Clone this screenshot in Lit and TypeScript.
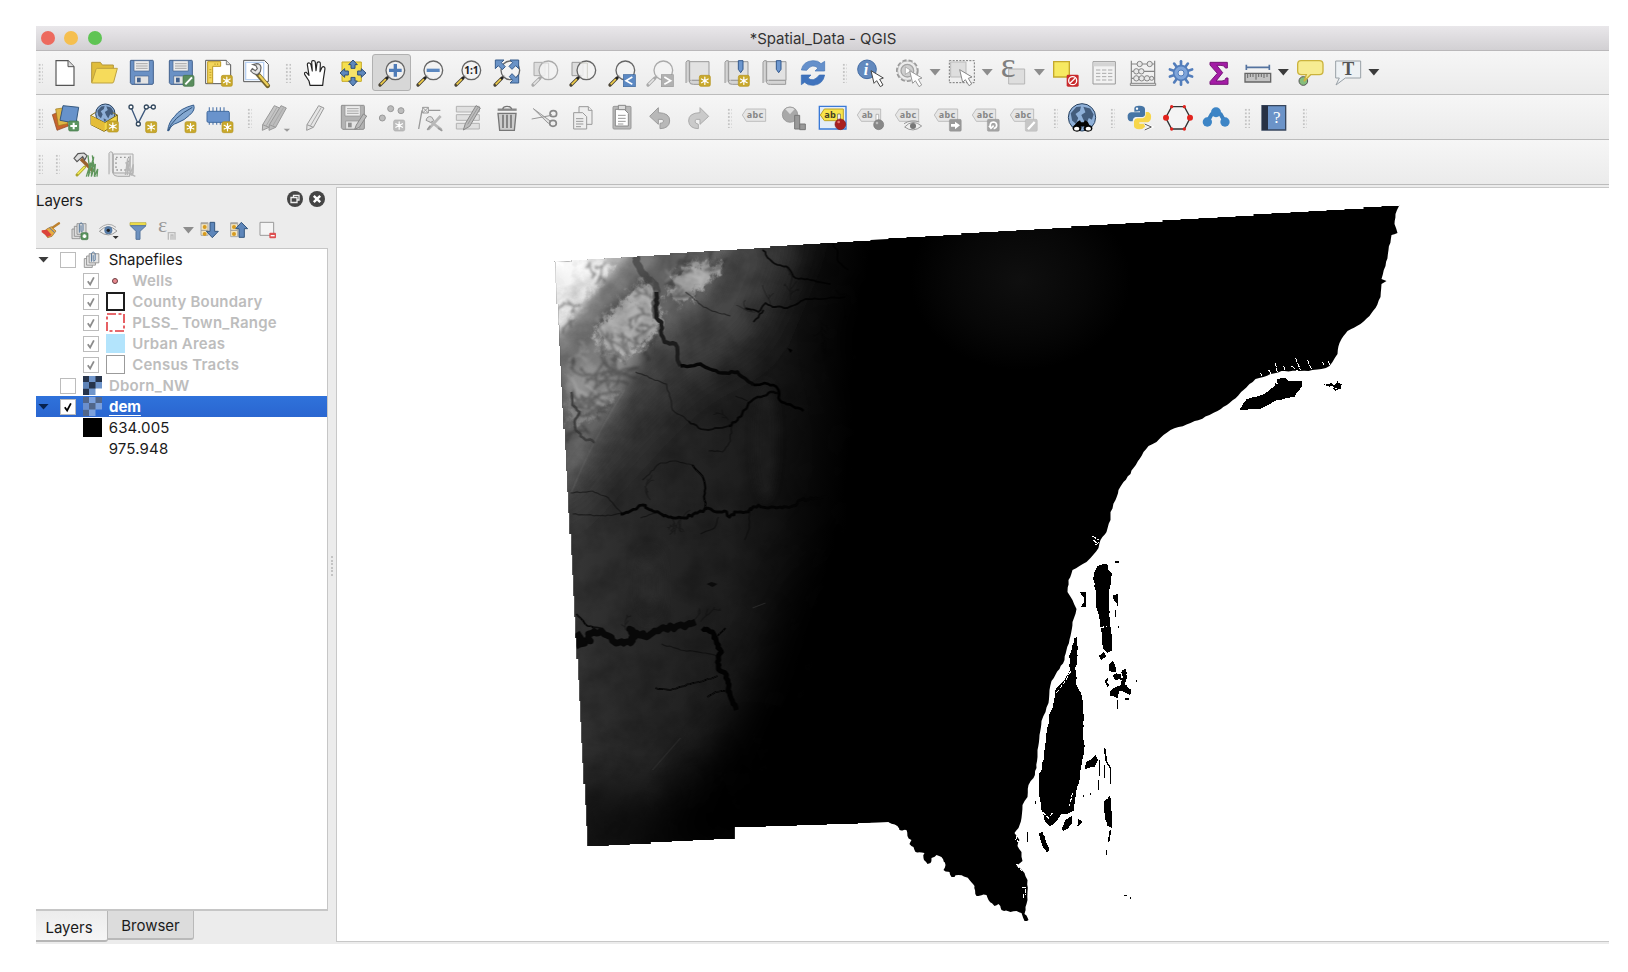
import { LitElement, html, svg, css } from "lit";
import { customElement } from "lit/decorators.js";

/* ---------- icon fragments, drawn on an 84 x 84 grid ---------- */
const star = (x: number, y: number, c = "#c9a92c") => svg`
  <rect x=${x} y=${y} width="33" height="33" rx="5" fill=${c} stroke=${c === "#c9a92c" ? "#b3941f" : "#aaa"} stroke-width="2"/>
  <g transform="translate(${x + 16.5} ${y + 16.5})" stroke="#fff" stroke-width="3.6" stroke-linecap="round">
    <path d="M0-11V11M-10-5.5L10 5.5M-10 5.5L10-5.5"/><circle r="4.5" fill="#fff" stroke="none"/></g>`;
const dimStar = (x: number, y: number) => star(x, y, "#bdbdbd");
const plus = (x: number, y: number, s = 30) => svg`
  <rect x=${x} y=${y} width=${s} height=${s} rx="4" fill="#5b9460" stroke="#3f7747" stroke-width="2"/>
  <path d="M${x + s / 2} ${y + 5}v${s - 10}M${x + 5} ${y + s / 2}h${s - 10}" stroke="#fff" stroke-width="6"/>`;
const mag = (inner: unknown, dim = false) => svg`
  <path d="M6 78L26 58" stroke=${dim ? "#a9a9a9" : "#4a4335"} stroke-width="10" stroke-linecap="round"/>
  <path d="M8 76L24 60" stroke=${dim ? "#e4e4e4" : "#f2cf49"} stroke-width="5"/>
  <path d="M24 60L36 49" stroke=${dim ? "#aaa" : "#222"} stroke-width="7"/>
  <circle cx="52" cy="34" r="28" fill="#f2f3f2" fill-opacity=".88" stroke=${dim ? "#aaa" : "#666"} stroke-width="4"/>${inner}`;
const cursor = (x: number, y: number, s = "#444") => svg`
  <path transform="translate(${x} ${y})" d="M0 0L9 38L17 30L28 48L36 43L26 26L37 22Z" fill="#fff" stroke=${s} stroke-width="3" stroke-linejoin="round"/>`;
const tag = (t: string) => svg`
  <path d="M1 33L13 15H71V52H13Z" fill="#e6e6e6" stroke="#b5b5b5" stroke-width="2.5"/>
  <text x="14" y="42" class="b" font-size="27" fill="#858585" textLength=${t.length * 16.5}>${t}</text>`;
const scroll = (extra: unknown) => svg`
  <path d="M17 8H75V64H17Z" fill="#e2e2e2" stroke="#999" stroke-width="3"/>
  <path d="M6 72V10Q8 3 16 5V66Q16 77 28 76H74V64H24" fill="#d4d4d4" stroke="#999" stroke-width="3"/>${extra}`;
const pin = svg`<path d="M46 5H60V31L53 41L46 31Z" fill="#6d97cf" stroke="#33588c" stroke-width="3"/>`;
const floppy = (c: string, s: string, x: unknown) => svg`
  <path d="M8 4H74Q76 4 76 7V72Q76 76 72 76H11L7 71V6Z" fill=${c} stroke=${s} stroke-width="3"/>
  <path d="M18 5H64V36H18Z" fill="#ececec" stroke=${s} stroke-width="2"/>
  <path d="M24 14H59M24 21H59M24 28H59" stroke="#999" stroke-width="2.5"/>
  <path d="M20 51H62V75H20Z" fill="#e4e4e4" stroke=${s} stroke-width="2"/><path d="M27 56H38V70H27Z" fill=${s}/>${x}`;
const globe = (cx: number, cy: number, r: number) => svg`
  <circle cx=${cx} cy=${cy} r=${r} fill="#8fb0d8" stroke="#26405f" stroke-width="3"/>
  <g transform="translate(${cx} ${cy}) scale(${r / 40})" fill="#435c7c">
  <path d="M-33-12L-17-30L-3-32L-6-19L-19-10L-11 2L-18 19L-29 9Z"/><path d="M4-31L24-26L34-8L29 7L20 2L12 20L3 5L-2-7L10-15Z"/><path d="M-7 19L6 26L-5 33Z"/></g>`;
const pencil = (dx: number, c = "#d0d0d0") => svg`
  <path transform="translate(${dx} 0)" d="M14 62L49 5L65 12L33 70L13 79Z M14 62L33 70" fill=${c} stroke="#999" stroke-width="3" stroke-linejoin="round"/>
  <path transform="translate(${dx} 0)" d="M24 66L57 10" stroke="#aaa" stroke-width="3"/>`;

const icons: Record<string, unknown> = {
  file: svg`<path d="M15 5H51L69 23V79H15Z" fill="#fff" stroke="#555" stroke-width="3.5"/><path d="M51 5V23H69" fill="#ddd" stroke="#555" stroke-width="3"/>`,
  open: svg`<path d="M5 70V10H31L37 18H70V30" fill="#e0bd3c" stroke="#b3973b" stroke-width="3"/><path d="M5 72L18 31Q19 28 23 28H82L71 69Q70 72 66 72Z" fill="#f6db5b" stroke="#bda13f" stroke-width="3"/>`,
  save: floppy("#6a91c5", "#42618d", ""),
  saveAs: floppy("#6a91c5", "#42618d", svg`<rect x="48" y="49" width="33" height="33" rx="5" fill="#5a8d5e" stroke="#417346" stroke-width="2"/><path d="M55 76L75 55" stroke="#fff" stroke-width="6"/>`),
  layoutNew: svg`<path d="M2 4H64L77 17V74H2Z" fill="#fff" stroke="#555" stroke-width="3"/><path d="M64 4V17H77" fill="#ddd" stroke="#555" stroke-width="2"/>
    <path d="M8 8H47V22H23V72H8Z" fill="#f3d65b" stroke="#bd9a23" stroke-width="3"/><path d="M13 32h6M13 40h6M13 48h6M13 56h6M30 13v5M38 13v5" stroke="#a68216" stroke-width="2"/>${star(49, 49)}`,
  layouts: svg`<path d="M2 4H64L76 16V68H2Z" fill="#fff" stroke="#555" stroke-width="3"/><path d="M8 10H62V62H8Z" fill="#fff" stroke="#b9d1f3" stroke-width="4"/>
    <path d="M41 42L74 80" stroke="#75652b" stroke-width="14" stroke-linecap="round"/><path d="M50 50L74 78" stroke="#edcf59" stroke-width="7" stroke-linecap="round"/>
    <path d="M30 17L41 14Q53 14 54 26L52 38L43 47Q31 46 23 36L28 29L37 35L43 29L39 20Z" fill="#e5e5e5" stroke="#666" stroke-width="3.5"/>`,
  hand: svg`<path d="M27 79L24 66L11 46Q9 39 16 40L24 49L19 17Q19 11 25 12Q29 13 30 18L34 36L32 9Q33 4 38 5Q43 5 43 11L45 35L48 12Q51 7 56 9Q59 11 58 17L57 38L63 25Q67 21 71 25Q73 29 71 35L67 61L65 79Z" fill="#fff" stroke="#222" stroke-width="3.5" stroke-linejoin="round"/>`,
  pan: svg`<path d="M9 9H67V67H9Z" fill="#f5df4e" stroke="#c6a927" stroke-width="3"/><g fill="#5e88bd" stroke="#2e4f7c" stroke-width="3">
    <path d="M42 3L55 17H48V28H36V17H29Z"/><path d="M42 81L29 66H36V55H48V66H55Z"/><path d="M3 42L17 29V36H28V48H17V55Z"/><path d="M81 42L67 55V48H56V36H67V29Z"/></g><path d="M31 31H53V53H31Z" fill="#f5e36b"/>`,
  zoomIn: mag(svg`<path d="M52 15V53M33 34H71" stroke="#4e7bb7" stroke-width="10"/>`),
  zoomOut: mag(svg`<path d="M32 34H71" stroke="#5c88c0" stroke-width="10"/>`),
  zoomOne: mag(svg`<text x="31" y="45" class="b" font-size="31" fill="#222" textLength="43">1:1</text>`),
  zoomFull: svg`${mag("")}<g fill="#6a93c7" stroke="#375c8c" stroke-width="3"><path d="M7 3H33L25 11L37 23L28 32L16 20L7 29Z"/><path d="M77 3V29L68 20L57 31L48 22L59 11L51 3Z"/><path d="M77 72H51L59 64L49 53L57 44L69 56L77 47Z"/></g>`,
  zoomSel: svg`<path d="M9 10H42V50H9Z" fill="#ddd" stroke="#aaa" stroke-width="3"/>${mag(svg`<path d="M34 12H53V60" fill="none" stroke="#d4d4d4" stroke-width="3"/>`, true)}`,
  zoomLayer: svg`<path d="M9 10H42V50H9Z" fill="#ddd" stroke="#999" stroke-width="3"/>${mag(svg`<path d="M34 12H55V60" fill="none" stroke="#d0d0c8" stroke-width="3"/>`)}`,
  zoomLast: mag(svg`<rect x="46" y="47" width="36" height="36" fill="#5c89c3" stroke="#3b659a" stroke-width="2"/><path d="M73 54L54 65L73 76" fill="none" stroke="#fff" stroke-width="5"/>`),
  zoomNext: mag(svg`<rect x="46" y="47" width="36" height="36" fill="#b1b1b1" stroke="#999" stroke-width="2"/><path d="M55 54L74 65L55 76" fill="none" stroke="#fff" stroke-width="5"/>`, true),
  mapNew: scroll(star(46, 49)),
  bmNew: scroll(svg`${pin}${star(46, 49)}`),
  bookmarks: scroll(pin),
  refresh: svg`<path d="M7 33Q12 7 41 5Q58 4 66 14L77 7V36H48L57 27Q39 12 23 34Z" fill="#6590cb" stroke="#4474b5" stroke-width="2"/><path d="M77 48Q72 76 44 79Q26 80 17 70L7 77V48H36L27 57Q43 71 61 48Z" fill="#3f73bd" stroke="#376bb3" stroke-width="2"/>`,
  identify: svg`<circle cx="30" cy="31" r="28" fill="#6289be" stroke="#446da5" stroke-width="3"/><text x="20" y="48" class="s bi" font-size="48" fill="#fff">i</text>${cursor(42, 35)}`,
  action: svg`<circle cx="37" cy="35" r="30" fill="none" stroke="#999" stroke-width="8" stroke-dasharray="12 6"/><circle cx="37" cy="35" r="29" fill="#ececec" stroke="#aaa" stroke-width="2"/><circle cx="37" cy="35" r="19" fill="#cfcfcf" stroke="#a5a5a5" stroke-width="4"/><path d="M31 24L49 35L31 46Z" fill="#fff" stroke="#999" stroke-width="2"/>${cursor(44, 35, "#999")}`,
  select: svg`<path d="M4 5H79V71H4Z" fill="none" stroke="#777" stroke-width="3" stroke-dasharray="6 4"/><path d="M8 9H54V54H8Z" fill="#dedede" stroke="#bbb" stroke-width="3"/>${cursor(35, 32, "#888")}`,
  expr: svg`<path d="M26 30H74V75H26Z" fill="#dedede" stroke="#b6b6b6" stroke-width="3"/><text x="2" y="55" class="s" font-size="106" fill="#808080">ε</text>`,
  deselect: svg`<path d="M5 8H52V54H5Z" fill="#f7e961" stroke="#c5a92d" stroke-width="4"/><rect x="44" y="47" width="36" height="36" rx="4" fill="#c92a2c"/><circle cx="62" cy="65" r="12" fill="none" stroke="#fff" stroke-width="4"/><path d="M54 73L70 57" stroke="#fff" stroke-width="4"/>`,
  table: svg`<path d="M9 8H76V75H9Z" fill="#f2f2f2" stroke="#999" stroke-width="3"/><path d="M10 10H75V22H10Z" fill="#d4d4d4"/><path d="M18 33h13M36 33h13M54 33h13M18 43h13M36 43h13M54 43h13M18 53h13M36 53h13M54 53h13M18 63h13M36 63h13M54 63h13" stroke="#aaa" stroke-width="3"/>`,
  abacus: svg`<g fill="#e8e8e8" stroke="#858585" stroke-width="3"><path d="M7 5V72M77 5V72M7 15H77M7 37H77M7 58H77" stroke-width="3.5"/><path d="M4 73H80V79H4Z"/><circle cx="32" cy="15" r="8"/><circle cx="62" cy="15" r="8"/><circle cx="22" cy="37" r="8"/><circle cx="37" cy="37" r="8"/><circle cx="22" cy="58" r="8"/><circle cx="38" cy="58" r="8"/><circle cx="54" cy="58" r="8"/><circle cx="68" cy="58" r="6"/></g>`,
  gear: svg`<g transform="translate(42 42)"><g stroke="#527dbb" stroke-width="8" stroke-linecap="round">${[0, 36, 72, 108, 144].map(a => svg`<path transform="rotate(${a})" d="M0-35V35"/>`)}</g><circle r="22" fill="#7fa5da" stroke="#527dbb" stroke-width="5"/><circle r="9" fill="#e8edf5" stroke="#527dbb" stroke-width="3"/></g>`,
  sigma: svg`<path d="M15 10H67V27H61Q60 19 48 19H35L53 41L33 66H51Q62 66 63 57H69V76H15V68L37 43L15 18Z" fill="#a41ca6" stroke="#761578" stroke-width="3"/>`,
  measure: svg`<path d="M7 25H76M7 17V33M76 17V33" stroke="#54739f" stroke-width="5"/><path d="M3 43H80V69H3Z" fill="#c3c3c3" stroke="#666" stroke-width="4"/><path d="M11 45v12M19 45v9M27 45v9M36 45v17M44 45v9M52 45v9M60 45v12M69 45v9" stroke="#555" stroke-width="2.5"/>`,
  tip: svg`<circle cx="22" cy="66" r="13" fill="#86bd7c" stroke="#555" stroke-width="3"/><path d="M15 5H70Q81 5 81 16V36Q81 47 70 47H44L24 67L31 47H16Q5 47 5 36V16Q5 5 15 5Z" fill="#f7ec92" stroke="#cbb33d" stroke-width="4"/>`,
  note: svg`<path d="M5 6H80V57H34L6 78L16 57H5Z" fill="#edf1f4" stroke="#98a0a6" stroke-width="3"/><text x="25" y="49" class="s bo" font-size="54" fill="#555">T</text>`,
  layers: svg`<path d="M4 32L39 17L52 66L18 79Z" fill="#c8632e" stroke="#85411c" stroke-width="2"/><path d="M14 15L49 10L50 59L22 65Z" fill="#dfb746" stroke="#9a7416" stroke-width="2"/><path d="M36 5L83 10L75 58L27 49Z" fill="#6792ca" stroke="#34587f" stroke-width="3"/>${plus(53, 51)}`,
  box: svg`${globe(46, 29, 29)}<path d="M3 35L44 56L82 33V60L42 82L3 62Z" fill="#f2d747" stroke="#7a6618" stroke-width="3"/><path d="M3 35L44 56V82L3 62Z" fill="#e4bd38"/><path d="M1 35L17 25M68 26L82 33" stroke="#806a15" stroke-width="3"/>${star(52, 51)}`,
  vector: svg`<path d="M9 10L30 59L55 10H76" fill="none" stroke="#3d587d" stroke-width="4"/><g fill="#fff" stroke="#34495e" stroke-width="4"><circle cx="9" cy="9" r="6"/><circle cx="55" cy="9" r="6"/><circle cx="76" cy="9" r="6"/><circle cx="31" cy="60" r="6"/></g>${star(53, 53)}`,
  feather: svg`<path d="M2 80Q5 54 23 37Q39 13 80 3Q86 18 68 33Q54 48 30 57Q12 62 6 80Z" fill="#85a9d2" stroke="#355c8c" stroke-width="3"/><path d="M3 80Q18 41 76 10" fill="none" stroke="#2f5179" stroke-width="3"/>${star(54, 53)}`,
  chip: svg`<path d="M13 10V62M24 10V62M35 10V62M46 10V62M57 10V62" stroke="#577db0" stroke-width="3.5"/><rect x="6" y="22" width="67" height="33" rx="4" fill="#6993cc" stroke="#426b9f" stroke-width="3"/>${star(51, 53)}`,
  pencils: svg`${pencil(-12, "#c5c5c5")}${pencil(8, "#bcbcbc")}<path d="M65 74H84L75 83Z" fill="#999"/>`,
  pencil: pencil(4, "#e5e5e5"),
  saveEdit: floppy("#b3b3b3", "#8f8f8f", svg`<path d="M47 76L52 63L73 30L83 36L61 70Z" fill="#bbb" stroke="#888" stroke-width="3"/>`),
  points: svg`<g fill="#bcbcbc" stroke="#999" stroke-width="3"><circle cx="38" cy="14" r="9"/><circle cx="69" cy="20" r="9"/><circle cx="13" cy="42" r="9"/></g>${dimStar(47, 48)}`,
  vertex: svg`<g fill="none" stroke="#999"><path d="M18 19L8 75M37 19H73" stroke-width="4"/><path d="M20 10H37V27H20ZM20 10L37 27M37 10L20 27" stroke-width="3"/></g><path d="M37 76L74 36M38 48L76 77" stroke="#b8b8b8" stroke-width="8"/><path d="M34 78L43 65M66 72L79 80" stroke="#999" stroke-width="5"/><path d="M30 49Q34 34 47 39L54 50L44 55Z" fill="#ddd" stroke="#999" stroke-width="3"/>`,
  multi: svg`<g fill="#e0e0e0" stroke="#b3b3b3" stroke-width="3"><path d="M7 7H76V24H7ZM7 32H76V49H7ZM7 58H76V75H7Z"/></g><path d="M28 78L34 59L66 5L79 12L47 67Z" fill="#bbb" stroke="#888" stroke-width="3"/><path d="M41 61L72 10" stroke="#999" stroke-width="3"/>`,
  trash: svg`<path d="M15 28H69L64 79H20Z" fill="#ccc" stroke="#777" stroke-width="4"/><path d="M30 32V72M42 32V72M54 32V72" stroke="#777" stroke-width="5"/><path d="M14 17H71" stroke="#888" stroke-width="7"/><path d="M29 15Q31 7 42 7Q54 7 56 15" fill="none" stroke="#777" stroke-width="4"/>`,
  cut: svg`<path d="M7 14L59 52L52 58ZM2 45L57 35L63 31" fill="#e1e1e1" stroke="#999" stroke-width="3"/><g fill="none" stroke="#888" stroke-width="5"><ellipse cx="67" cy="29" rx="10" ry="9"/><ellipse cx="66" cy="58" rx="10" ry="9"/></g>`,
  copy: svg`<g fill="#eee" stroke="#999" stroke-width="3"><path d="M30 8H58L69 19V61H30Z"/><path d="M58 8V19H69"/><path d="M14 26H41L53 38V75H14Z"/><path d="M21 44H43M21 52H43M21 60H43M21 68H36"/></g>`,
  paste: svg`<rect x="15" y="7" width="54" height="68" rx="3" fill="#b8b8b8" stroke="#999" stroke-width="3"/><path d="M22 16H49L61 28V66H22Z" fill="#fff" stroke="#888" stroke-width="3"/><path d="M31 4H53V17H31Z" fill="#ddd" stroke="#888" stroke-width="3"/><path d="M30 34H53M30 43H53M30 52H53M30 60H46" stroke="#999" stroke-width="3"/>`,
  undo: svg`<path d="M11 37L37 11V26Q72 27 71 51Q70 73 42 74V58Q53 59 53 50Q51 44 37 46V61Z" fill="#b8b8b8" stroke="#9b9b9b" stroke-width="3" stroke-linejoin="round"/>`,
  redo: svg`<path d="M74 37L48 11V26Q13 27 14 51Q15 73 43 74V61Q31 58 33 50Q35 44 48 46V61Z" fill="#cacaca" stroke="#ababab" stroke-width="3" stroke-linejoin="round"/>`,
  label: tag("abc"),
  diagram: svg`<circle cx="30" cy="32" r="23" fill="#a8a8a8" stroke="#888" stroke-width="2"/><path d="M30 32L14 15Q30 4 46 15Z" fill="#ddd" stroke="#999" stroke-width="2"/><path d="M44 34H59V75H44ZM59 60H76V77H59Z" fill="#999" stroke="#777" stroke-width="3"/>`,
  labelSel: svg`<path d="M1 7H81V75H1Z" fill="#e3ecf7" stroke="#3979d7" stroke-width="4"/><path d="M4 33L16 15H73V50H16Z" fill="#f8e44a" stroke="#bda328" stroke-width="3"/><text x="16" y="42" class="b" font-size="28" fill="#454023">ab</text><path d="M56 30H64V51H56Z" fill="#fff" stroke="#555" stroke-width="2"/><circle cx="64" cy="61" r="16" fill="#a91f20" stroke="#7b1819" stroke-width="2"/><circle cx="59" cy="54" r="4" fill="#dd7774"/>`,
  labelPin: svg`${tag("ab")}<path d="M57 31H65V51H57Z" fill="#fff" stroke="#999" stroke-width="2"/><circle cx="65" cy="62" r="15" fill="#888" stroke="#777" stroke-width="2"/><circle cx="60" cy="57" r="4" fill="#bbb"/>`,
  labelEye: svg`${tag("abc")}<path d="M29 69Q53 43 80 66Q54 88 29 69Z" fill="#eee" stroke="#999" stroke-width="3"/><circle cx="54" cy="66" r="9" fill="#777"/><path d="M27 59Q49 45 73 54" fill="none" stroke="#999" stroke-width="3"/>`,
  labelMove: svg`${tag("abc")}<rect x="46" y="46" width="36" height="36" rx="4" fill="#999" stroke="#888"/><path d="M51 60H63V53L78 64L63 76V68H51Z" fill="#fff"/>`,
  labelRot: svg`${tag("abc")}<rect x="46" y="46" width="36" height="36" rx="4" fill="#a4a4a4" stroke="#888"/><path d="M55 69V61Q56 54 65 54Q74 55 74 64Q74 72 65 74M51 65L57 73L65 65" fill="none" stroke="#fff" stroke-width="5"/>`,
  labelEdit: svg`${tag("abc")}<rect x="46" y="46" width="36" height="36" rx="4" fill="#c6c6c6" stroke="#aaa"/><path d="M54 76L74 54" stroke="#fff" stroke-width="7"/>`,
  meta: svg`${globe(42, 40, 41)}<g fill="#050505"><path d="M28 53L36 49L39 55H47L51 49L59 53L66 67H17Z"/><ellipse cx="27" cy="73" rx="13" ry="10"/><ellipse cx="60" cy="73" rx="13" ry="10"/></g><ellipse cx="26" cy="74" rx="8" ry="5.5" fill="#fff"/><ellipse cx="61" cy="74" rx="8" ry="5.5" fill="#fff"/>`,
  python: svg`<path d="M25 23V12Q28 4 41 5Q57 6 57 15V33Q56 38 50 39H29Q21 40 20 52H12Q4 50 5 34Q8 25 16 25H42V22Z" fill="#4675a5"/><path d="M59 24H67Q77 28 75 43Q73 54 64 55H40V59H57V68Q51 76 39 76Q25 75 24 67V51Q26 43 34 43H50Q59 41 59 31Z" fill="#f7d64b"/><circle cx="33" cy="14" r="3.5" fill="#fff"/><path d="M55 60L77 69L55 78" fill="none" stroke="#fff" stroke-width="7"/><path d="M56 60L76 69L56 78" fill="none" stroke="#555" stroke-width="3"/>`,
  hex: svg`<path d="M23 8H61L79 41L61 75H23L5 41Z" fill="#f4f4f4" stroke="#333" stroke-width="4"/><g fill="#e2231d"><circle cx="6" cy="41" r="9"/><circle cx="78" cy="41" r="9"/><circle cx="23" cy="8" r="5"/><circle cx="61" cy="8" r="5"/><circle cx="23" cy="75" r="5"/><circle cx="61" cy="75" r="5"/></g>`,
  nodes: svg`<path d="M16 54L29 31L42 24L56 31L69 54" fill="none" stroke="#3a80bf" stroke-width="12"/><g fill="#3d85c6"><circle cx="42" cy="25" r="15"/><circle cx="16" cy="54" r="14"/><circle cx="69" cy="54" r="14"/></g>`,
  help: svg`<path d="M6 5H77V78H6Z" fill="#6b93c8" stroke="#37465d" stroke-width="4"/><path d="M6 5H24V78H6Z" fill="#273144"/><text x="39" y="57" class="s" font-size="51" fill="#fff">?</text>`,
  georef: svg`<path d="M15 75L38 51" stroke="#aaa42c" stroke-width="9" stroke-linecap="round"/><path d="M17 72L38 51" stroke="#f3ea55" stroke-width="5"/><path d="M27 27L65 65" stroke="#9b622f" stroke-width="10"/><path d="M6 25L18 11L36 9L45 17L38 30L32 20L15 35Z" fill="#ddd" stroke="#555" stroke-width="3.5"/><path d="M43 80L56 38L49 80L65 20L58 80L70 42L67 80L77 57L75 80M48 16L54 70M61 16L70 80" fill="none" stroke="#5f965c" stroke-width="4"/>`,
  plan: svg`<path d="M16 12H75V70H16Z" fill="#eee" stroke="#aaa" stroke-width="3"/><path d="M3 73V10Q7 1 14 8V68Q17 79 29 79H65V69H15V58" fill="#e5e5e5" stroke="#aaa" stroke-width="3"/><path d="M24 22H62V60H24Z" fill="none" stroke="#999" stroke-width="4" stroke-dasharray="5 7"/><path d="M52 75L59 25L58 75L67 17L66 76L76 43L74 75L82 79M53 37L72 77" fill="none" stroke="#b6b6b6" stroke-width="4"/>`,
  brush: svg`<path d="M44 34L66 19" stroke="#bd812f" stroke-width="7" stroke-linecap="round"/><path d="M29 36L43 29L57 42L45 58L32 62Q27 52 19 48Z" fill="#e5ad43" stroke="#9c6a24" stroke-width="2"/><path d="M14 40L30 38L44 54L31 60Q26 52 14 46Z" fill="#db433b"/><path d="M37 32L53 47" stroke="#5b76a6" stroke-width="3"/>`,
  groupAdd: svg`<g fill="#ddd" stroke="#8a8a8a" stroke-width="2.5"><path d="M18 36H42V65H18Z"/><path d="M25 28H50V58H25Z"/><path d="M33 20H60V52H33Z"/></g><path d="M40 47V23Q45 12 51 23V40Q45 50 45 39V25" fill="none" stroke="#56779b" stroke-width="3"/>${plus(45, 47, 21)}`,
  eye: svg`<path d="M13 43Q39 16 66 42Q41 65 13 43Z" fill="#eee" stroke="#999" stroke-width="3"/><path d="M13 35Q39 11 63 31" fill="none" stroke="#aaa" stroke-width="3"/><circle cx="40" cy="40" r="12" fill="#577ba5"/><circle cx="40" cy="40" r="5" fill="#222"/><path d="M53 57H71L62 66Z" fill="#333"/>`,
  filter: svg`<path d="M18 17H66V25H18Z" fill="#f3e24d" stroke="#b0a12d" stroke-width="2"/><path d="M19 26H66L48 43V67H36V43Z" fill="#6d91bf" stroke="#54749c" stroke-width="3"/>`,
  exprLayer: svg`<text x="15" y="46" class="s" font-size="66" fill="#999">ε</text><path d="M46 68V47H66V68M54 68V54H60V68" fill="none" stroke="#bbb" stroke-width="4"/>`,
  expand: svg`<path d="M18 17H39V55H18Z" fill="#f5e6be" stroke="#aaa" stroke-width="3"/><path d="M18 20h20M18 40h20" stroke="#999" stroke-width="3"/><circle cx="29" cy="30" r="6" fill="#d69b20"/><circle cx="29" cy="51" r="6" fill="#d69b20"/><path d="M45 16H59V43H70L52 62L34 43H45Z" fill="#5e86ba" stroke="#34577f" stroke-width="3"/>`,
  collapse: svg`<path d="M20 17H41V59H20Z" fill="#f5e6be" stroke="#aaa" stroke-width="3"/><path d="M20 20h20M20 40h20" stroke="#999" stroke-width="3"/><circle cx="30" cy="30" r="6" fill="#d69b20"/><circle cx="30" cy="51" r="6" fill="#d69b20"/><path d="M52 16L71 35H61V61H45V35H35Z" fill="#5e86ba" stroke="#34577f" stroke-width="3"/>`,
  remove: svg`<path d="M21 16H62V55H21Z" fill="#f4f4f4" stroke="#999" stroke-width="3"/><rect x="49" y="47" width="20" height="17" rx="3" fill="#dd4f50"/><path d="M53 56H65" stroke="#fff" stroke-width="4"/>`,
  group: svg`<g fill="#e6e6e6" stroke="#8c8c8c" stroke-width="3"><path d="M15 37H43V68H15Z"/><path d="M23 28H54V60H23Z"/><path d="M32 20H66V52H32Z"/></g><path d="M40 48V20Q46 8 53 20V42Q46 52 46 39V25" fill="none" stroke="#56779b" stroke-width="3.5"/>`,
};
const icon = (n: string) => html`<svg class="ic" viewBox="0 0 84 84">${icons[n]}</svg>`;

/* ---------- terrain geometry ---------- */
type P = [number, number];
let seed = 7;
const rnd = () => ((seed = (seed * 16807) % 2147483647) / 2147483647);
const pts = (s: string): P[] => s.trim().split(/\s+/).map(p => p.split(",").map(Number) as P);
function rough(s: string, amp: number, step = 4, close = false): string {
  const a = pts(s);
  if (close) a.push(a[0]);
  let d = `M${a[0][0]} ${a[0][1]}`;
  for (let i = 1; i < a.length; i++) {
    const [x0, y0] = a[i - 1], [x1, y1] = a[i];
    const n = Math.max(1, Math.round(Math.hypot(x1 - x0, y1 - y0) / step));
    for (let k = 1; k <= n; k++) {
      const t = k / n, j = k === n ? 0 : amp;
      d += `L${(x0 + (x1 - x0) * t + (rnd() - 0.5) * 2 * j).toFixed(1)} ${(y0 + (y1 - y0) * t + (rnd() - 0.5) * 2 * j).toFixed(1)}`;
    }
  }
  return d + (close ? "Z" : "");
}
function creek(x: number, y: number, a: number, n: number, out: string[], depth = 0) {
  let d = `M${x.toFixed(1)} ${y.toFixed(1)}`;
  for (let i = 0; i < n; i++) {
    a += (rnd() - 0.5) * 0.6;
    x += Math.cos(a) * 2.6; y += Math.sin(a) * 2.6;
    d += `L${x.toFixed(1)} ${y.toFixed(1)}`;
    if (depth < 2 && rnd() < 0.34) creek(x, y, a + (rnd() < 0.5 ? -0.75 : 0.75), Math.floor(n * 0.45), out, depth + 1);
  }
  out.push(d);
}
function creeks(list: [number, number, number, number][]): string {
  const out: string[] = [];
  list.forEach(([x, y, a, n]) => creek(x, y, a, n, out));
  return out.join("");
}
const stairs = (x0: number, y0: number, x1: number, y1: number, n: number): string => {
  let s = "";
  for (let i = 0; i < n; i++) {
    const xa = x0 + ((x1 - x0) * (i + 1)) / n, ya = y0 + ((y1 - y0) * i) / n, yb = y0 + ((y1 - y0) * (i + 1)) / n;
    s += `L${xa.toFixed(0)} ${ya.toFixed(0)}L${xa.toFixed(0)} ${yb.toFixed(0)}`;
  }
  return s;
};
const stairsV = (x0: number, y0: number, x1: number, y1: number, n: number): string => {
  let s = "";
  for (let i = 0; i < n; i++) {
    const ya = y0 + ((y1 - y0) * (i + 1)) / n, xa = x0 + ((x1 - x0) * i) / n, xb = x0 + ((x1 - x0) * (i + 1)) / n;
    s += `L${xa.toFixed(0)} ${ya.toFixed(0)}L${xb.toFixed(0)} ${ya.toFixed(0)}`;
  }
  return s;
};
const eastCoast = rough("1399,205 1395,214 1394,224 1397,233 1391,235 1388,250 1385,266 1381,279 1386,281 1381,284 1380,297 1375,308 1369,316 1360,324 1347,331 1341,339 1339,343 1337,354 1332,362 1329,366 1321,369 1308,371 1299,371 1281,371 1270,374 1263,377 1255,379 1243,390 1229,403 1217,411 1209,415 1190,423 1170,430 1163,435 1156,442 1148,446 1143,452 1133,468 1130,474 1123,482 1118,490 1115,500 1110,512 1110,520 1106,532 1100,540 1098,548 1090,558 1086,562 1079,566 1072,570 1068,580 1067,592 1072,600 1076,609 1072,622 1070,636 1066,650 1064,660 1059,669 1051,681 1049,690 1048,703 1045,712 1041,721 1039,735 1037,750 1036,768 1033,778 1028,785 1027,797 1022,805 1021,818 1018,828 1014,833 1019,840 1017,846 1021,852 1022,861 1016,866 1024,873 1027,880 1027,900 1025,907", 0.5, 4);
const southShore = rough("1025,907 1024,914 1028,920 1024,921 1021,913 1016,911 1010,912 1001,910 998,904 994,906 988,900 986,895 976,896 974,886 969,880 965,877 958,875 951,877 949,872 943,870 945,865 941,857 936,855 931,858 930,863 927,864 923,858 924,853 915,852 913,847 909,844 911,840 907,836 906,830 899,830 897,826 892,824 888,822", 0.9, 2.5);
const outline = `M554 261${stairs(554, 261.5, 870, 239.5, 19)}${stairs(870, 239.4, 1399, 205, 29)}${eastCoast.replace("M", "L")}${southShore.replace("M", "L")}${stairs(888, 823, 734, 828.5, 5)}L734 839${stairs(734, 839, 587, 847, 7)}${stairsV(587, 847, 554, 262, 28)}Z`;
const isles: string[] = [
  ["1239,410 1246,399 1264,394 1274,386 1277,379 1285,378 1288,381 1301,381 1301,387 1294,397 1277,400 1259,409", 0.5],
  ["1320,384 1333,385 1337,381 1342,384 1341,389 1335,391 1331,387", 1.6],
  ["1094,572 1097,566 1103,564 1108,565 1108,570 1112,574 1110,582 1108,600 1110,630 1112,638 1112,650 1107,653 1102,648 1100,622 1096,608 1095,590 1093,580", 0.5],
  ["1074,638 1076,637 1077,650 1075,670 1076,685 1081,695 1083,710 1083,735 1084,747 1080,770 1079,780 1075,797 1074,810 1069,813 1060,815 1055,822 1049,826 1044,820 1040,807 1038,780 1042,765 1045,738 1048,720 1053,703 1056,688 1064,680 1069,671 1069,655", 0.8],
  ["1063,831 1061,829 1065,820 1071,816 1072,820 1068,828", 1], ["1076,827 1078,819 1082,822 1079,825", 1],
  ["1038,833 1042,832 1045,840 1049,851 1046,852 1041,843", 0.7],
  ["1103,802 1109,796 1111,805 1111,818 1112,828 1107,826 1104,813", 0.6],
  ["1085,769 1086,762 1092,758 1095,755 1097,761 1094,767 1087,768", 1.2],
  ["1079,592 1085,592 1085,607 1080,607 1083,603 1083,597", 0],
  ["1113,595 1117,594 1117,606 1114,601", 0.7],
  ["1108,665 1112,661 1116,668 1115,672 1109,671", 1.4], ["1122,670 1125,669 1125,685 1131,690 1129,695 1119,691 1117,698 1110,696 1112,689 1121,685", 1.5],
  ["1098,655 1103,652 1106,657 1100,662", 1.6], ["1104,682 1108,678 1107,687", 1.4], ["1112,675 1120,674 1122,681 1115,680", 1.8],
].map(([s, a]) => rough(s as string, a as number, 3, true));
const shoreBits = "M1117 700V709M1124 699H1128M1104 748L1106 762L1110 768V784M1104 765V778M1099 760V776M1098 780V790M1110 830L1108 842M1106 850V855M1114 562H1118M1115 610V617M1118 626V628M1135 681H1136M1124 895L1126 896M1129 898H1130M1082 796H1083M1027 832V842M1035 801V804M1089 794H1090M1044 802V806";
const whiteBits = "M1260 373L1262 377M1268 370L1271 374M1275 363L1277 373M1283 366L1285 371M1291 366L1297 371M1295 358L1300 370M1307 360L1311 369M1322 362L1324 366M1328 361L1329 365M1092 536L1098 540M1095 545L1099 542M1093 540L1096 543M1072 572L1077 574M1056 693L1064 682L1071 670M1042 812L1048 818L1052 813M1072 793L1069 806M1100 628L1106 626M1274 381L1277 384M1019 831L1015 840L1019 842M1016 864L1022 872M1021 887H1025V895M1023 894V900M1012 914L1016 916M1330 386L1336 389";
const rivers = {
  a0: rough("634,256 640,270 646,278 655,285 656,293 655,306 656,318", 1.4, 3),
  a: rough("656,292 656,318 661,322 661,335 664,342 675,344 677,350 677,360 680,366", 0.9, 3),
  a1: rough("680,366 690,366 700,364 712,370 722,373 737,372 744,378 753,385", 0.9, 3),
  a2: rough("753,385 764,383 773,385 778,390 778,398 781,402 792,406 803,411", 0.8, 3),
  b: rough("778,393 770,392 763,396 757,397 748,403 742,413 735,422 728,426", 1, 3),
  b2: rough("728,426 718,428 708,430 698,428 688,421", 1, 3),
  c: rough("620,514 630,511 642,505 655,512 668,517 684,518 697,513 707,508 716,512 724,511 729,517 734,512 745,512 758,505 768,508 782,508 792,506 800,500 828,497", 1.3, 2.5),
  d: rough("692,465 700,474 704,482 704,500 706,510", 0.8, 3),
  e: rough("576,636 580,644 590,641 588,634 601,631 608,636 617,643 630,643 634,637 629,629 636,633 646,637 654,631 664,628 675,627 686,625 695,622", 1.8, 2.5),
  f: rough("702,628 712,632 716,643 721,652 717,662 720,671 726,675 728,688 732,701 736,710", 1.3, 2.5),
  g: rough("655,688 670,690 690,684 705,680 717,676", 0.7, 3) + rough("707,697 715,692 725,691", 0.5, 3) + rough("717,636 725,628", 0.5, 3) + rough("576,614 587,626 600,628", 0.5, 3),
  h: rough("762,250 772,262 788,268 795,278 810,280 830,284", 0.9, 3) + rough("831,241 837,251 838,262 848,270", 1, 3) + rough("745,308 758,312 765,303 775,307 787,308 805,299 845,297", 1, 3) + rough("753,322 763,310", 0.8, 3),
  k: rough("570,493 592,491 608,498 616,508 622,514", 0.7, 3) + rough("572,514 605,516 622,513", 0.6, 3) + rough("642,480 660,463 676,461 692,465", 0.6, 3) + rough("640,518 655,513", 0.5, 3) + rough("718,517 714,528 700,534", 0.6, 3) + rough("749,512 749,528 744,540", 0.6, 3) + rough("735,396 747,401", 0.5, 3) + rough("685,292 703,307 718,313 730,316", 0.6, 3) + rough("688,421 672,410 669,396 666,384 652,379 635,372", 0.8, 3) + rough("731,427 730,441 722,452 708,451", 0.8, 3) + rough("661,644 680,650 705,653 717,656", 0.6, 3),
  l: rough("571,392 572,405 579,412 574,422 575,430 583,438 594,443", 1.2, 3),
};
const dend = creeks([[650, 315, 3.1, 9], [652, 298, 3.4, 8], [655, 325, 2.9, 9], [657, 335, 2.5, 10], [664, 285, -0.3, 10], [668, 295, 0, 9], [674, 268, -0.5, 8], [705, 265, -1.2, 7], [704, 270, 0.2, 8],
  [632, 355, 3.6, 12], [636, 378, 3.4, 15], [620, 392, 3.3, 14], [612, 405, 3.1, 14], [600, 420, 3.6, 12], [590, 434, 3.8, 10], [625, 365, 4.2, 10], [605, 360, 2.5, 12], [590, 375, 2.9, 9],
  [605, 262, 2.2, 7], [589, 262, 1.3, 6], [575, 320, 2.9, 6], [580, 305, 3.3, 7], [640, 345, 3.3, 8], [612, 345, 3.8, 8], [638, 368, 3.0, 14], [628, 384, 3.6, 12], [606, 412, 3.5, 11]]);
const ridges = creeks([[598, 330, -0.6, 12], [604, 340, -0.2, 12], [612, 332, 0.3, 10], [625, 310, -1, 8], [640, 290, 1, 8], [566, 375, 0.4, 10], [570, 400, 0.1, 10], [585, 385, 0.5, 9], [568, 360, -0.4, 8], [580, 415, -0.2, 9],
  [558, 290, 0.2, 7], [562, 310, 0.1, 7], [570, 275, -0.3, 8], [665, 282, -0.9, 8], [680, 275, -0.2, 8], [690, 268, 0.4, 7]]);
const dimCreeks = creeks([[790, 300, -1.8, 9], [770, 304, -1.6, 8], [755, 312, 3.4, 8], [728, 420, -2.2, 6], [650, 500, -2.5, 8], [690, 510, 2.5, 9], [690, 625, -1, 6], [625, 630, -1.9, 6], [700, 622, -0.7, 8], [670, 515, 1, 8], [835, 290, 0.5, 9], [845, 300, 1.4, 8], [820, 320, 1.6, 9]]);

const terrain = html`
<svg class="map" viewBox="336.5 188 1272.5 753">
  <defs>
    <clipPath id="land"><path d=${outline}/></clipPath>
    <linearGradient id="base" gradientUnits="userSpaceOnUse" x1="560" y1="500" x2="850" y2="530">
      <stop offset="0" stop-color="#393939"/><stop offset=".3" stop-color="#292929"/><stop offset=".6" stop-color="#1e1e1e"/><stop offset=".82" stop-color="#0b0b0b"/><stop offset="1" stop-color="#000"/></linearGradient>
    <radialGradient id="haze"><stop offset="0" stop-color="#0f0f0f"/><stop offset=".6" stop-color="#070707"/><stop offset="1" stop-color="#000"/></radialGradient>
    <filter id="b24" x="-60%" y="-60%" width="220%" height="220%"><feGaussianBlur stdDeviation="22"/></filter>
    <filter id="b10" x="-60%" y="-60%" width="220%" height="220%"><feGaussianBlur stdDeviation="8"/></filter>
    <filter id="b4" x="-50%" y="-50%" width="200%" height="200%"><feGaussianBlur stdDeviation="4"/></filter>
    <filter id="b1"><feGaussianBlur stdDeviation=".7"/></filter>
    <filter id="b2"><feGaussianBlur stdDeviation="1.2"/></filter>
    <filter id="frill" x="-20%" y="-20%" width="140%" height="140%"><feTurbulence type="fractalNoise" baseFrequency=".12" numOctaves="3" seed="9" result="n"/><feGaussianBlur in="SourceGraphic" stdDeviation="2.5"/><feDisplacementMap in2="n" scale="22" xChannelSelector="R" yChannelSelector="G"/></filter>
    <filter id="grain" x="0" y="0" width="100%" height="100%"><feTurbulence type="fractalNoise" baseFrequency=".035" numOctaves="6" seed="4"/><feColorMatrix values="0 0 0 0 0  0 0 0 0 0  0 0 0 0 0  2 0 0 0 -.7"/></filter>
  </defs>
  <g clip-path="url(#land)">
    <rect x="540" y="190" width="870" height="750" fill="#000"/>
    <rect x="540" y="190" width="330" height="700" fill="url(#base)"/>
    <path d="M890 180L875 260L840 330L860 420L860 500L800 590L750 700L680 790L640 860H900Z" fill="#000" filter="url(#b24)" opacity=".85"/>
    <path d="M570 770L650 800L760 740L760 870H560Z" fill="#000" filter="url(#b24)" opacity=".62"/>
    <path d="M530 220H800L750 340L690 370L655 400L545 520Z" fill="#484848" filter="url(#b24)"/>
    <path d="M530 220H745L705 300L645 350L622 395L595 450L560 500L530 480Z" fill="#6a6a6a" filter="url(#b10)" opacity=".85"/>
    <path d="M530 235H645L560 345L535 345Z" fill="#d6d6d6" filter="url(#b10)"/>
    <ellipse cx="558" cy="262" rx="38" ry="30" fill="#fff" filter="url(#b10)"/>
    <ellipse cx="555" cy="300" rx="16" ry="30" fill="#ececec" filter="url(#b4)"/>
    <path d="M560 360L600 335L640 345L628 372L600 405L566 405Z" fill="#8e8e8e" filter="url(#b10)"/>
    <g filter="url(#frill)">
      <path d="M596 326L644 281L658 290L659 330L643 346L620 358L600 350Z" fill="#b4b4b4"/>
      <path d="M668 296L674 274L688 266L712 260L720 270L702 288L681 304Z" fill="#a8a8a8"/>
      <path d="M566 376L599 366L620 388L600 412L570 426Z" fill="#929292" opacity=".75"/>
      <path d="M560 262L620 262L600 282L560 330Z" fill="#f4f4f4" opacity=".6"/>
    </g>
    <path d="M650 250L645 262L610 290L580 326L555 352" fill="none" stroke="#808080" stroke-width="17" filter="url(#b4)" opacity=".85"/>
    <path d="M655 240L700 250" fill="none" stroke="#5a5a5a" stroke-width="14" filter="url(#b4)" opacity=".8"/>
    <path d="M571 492Q592 440 624 390" fill="none" stroke="#777" stroke-width="1.5" opacity=".35" filter="url(#b1)"/>
    <ellipse cx="765" cy="440" rx="12" ry="60" fill="#2a2a2a" filter="url(#b4)" opacity=".4"/>
    <ellipse cx="648" cy="585" rx="10" ry="34" fill="#3a3a3a" filter="url(#b10)" opacity=".5"/>
    <ellipse cx="1020" cy="280" rx="110" ry="90" fill="url(#haze)"/>
    <rect x="540" y="230" width="330" height="640" filter="url(#grain)" opacity=".22"/>
    <g fill="none" stroke-linejoin="round">
      <path d=${ridges} stroke="#fff" stroke-width="2" opacity=".15" filter="url(#b2)"/>
      <path d=${dend} stroke="#222" stroke-width="1.8" opacity=".42" filter="url(#b2)"/>
    </g>
    <g fill="none" stroke-linejoin="round" filter="url(#b1)">
      <path d=${dimCreeks} stroke="#050505" stroke-width="1.1" opacity=".3"/>
      <path d=${rivers.a0} stroke="#404040" stroke-width="7" opacity=".7"/>
      <path d=${rivers.l} stroke="#333" stroke-width="2.5" opacity=".8"/>
      <path d=${rivers.k} stroke="#080808" stroke-width="1.2" opacity=".45"/>
      <path d=${rivers.b2} stroke="#070707" stroke-width="1.8" opacity=".7"/>
      <path d=${rivers.g} stroke="#080808" stroke-width="1.6"/>
      <path d=${rivers.h} stroke="#040404" stroke-width="1.8" opacity=".8"/>
      <path d=${rivers.d} stroke="#080808" stroke-width="1.8"/>
    </g>
    <g fill="none" stroke-linejoin="round">
      <path d=${rivers.a} stroke="#1c1c1c" stroke-width="4"/><path d=${rivers.a1} stroke="#060606" stroke-width="3.4"/><path d=${rivers.a2} stroke="#000" stroke-width="2.6"/>
      <path d=${rivers.b} stroke="#040404" stroke-width="2.3"/><path d=${rivers.c} stroke="#040404" stroke-width="2.8"/>
      <path d=${rivers.e} stroke="#080808" stroke-width="6.5"/><path d="M574 634L582 646" stroke="#080808" stroke-width="12"/><path d=${rivers.f} stroke="#020202" stroke-width="5"/>
      <path d="M706 584L711 582L717 584L712 587Z" fill="#0b0b0b"/><path d="M787 348L792 350L790 353Z" fill="#000"/>
      <path d="M752 608L765 603M652 770L680 738" stroke="#444" stroke-width="1" opacity=".5" filter="url(#b1)"/>
    </g>
  </g>
  <g shape-rendering="crispEdges">${isles.map(d => svg`<path d=${d} fill="#000"/>`)}
    <path d=${shoreBits} fill="none" stroke="#000" stroke-width="1.6"/>
    <path d=${whiteBits} fill="none" stroke="#fff" stroke-width="1" stroke-dasharray="4 1.5"/></g>
</svg>`;

/* "|" is a drag grip, "v"/"V" a dim/active menu arrow, "*" marks a pressed button */
const row1 = "file open save saveAs layoutNew layouts | hand pan *zoomIn zoomOut zoomOne zoomFull zoomSel zoomLayer zoomLast zoomNext mapNew bmNew bookmarks refresh | identify action v select v expr v deselect table abacus gear sigma measure V tip note V";
const row2 = "layers box vector feather chip | pencils pencil saveEdit points vertex multi trash cut copy paste undo redo | label diagram labelSel labelPin labelEye labelMove labelRot labelEdit | meta | python hex nodes | help |";
const row3 = "| georef plan";

const cell = (t: string) =>
  t === "|" ? html`<span class="grip"></span>`
  : t === "v" || t === "V" ? html`<span class="drop ${t === "V" ? "on" : ""}"></span>`
  : html`<span class="cell ${t[0] === "*" ? "down" : ""}">${icon(t.replace("*", ""))}</span>`;
const bar = (s: string, k: string) => html`<div class="bar ${k}"><span class="grip first"></span>${s.split(" ").map(cell)}</div>`;

const check = (state: string) => html`<span class="box ${state}">${state === "off" ? "" : html`<svg viewBox="0 0 16 16"><path d="M4.3 8.3L7 12L11.3 3.8" fill="none" stroke="currentColor" stroke-width="2"/></svg>`}</span>`;
const raster = (a: string, b: string, c: string) => html`<svg class="sym" viewBox="0 0 19 19"><path d="M0 0H19V12.5H12.5V19H0Z" fill=${a}/>
  <path d="M0 0H6V6H0ZM12.5 0H19V6H12.5ZM6 6H12.5V12.5H6ZM0 12.5H6V19H0Z" fill=${b}/><path d="M0 6H6V12.5H0Z" fill=${c}/></svg>`;
const tri = (c = "") => html`<span class="tri ${c}"></span>`;

@customElement("app-root")
export class AppRoot extends LitElement {
  static styles = css`
    :host { display: block; width: 1628px; height: 972px; box-sizing: border-box; padding: 26px 19px 28px 36px; background: #fff; overflow: hidden;
      font-family: Inter, "Liberation Sans", sans-serif; font-size: 15px; color: #1b1b1b; }
    .window { display: flex; flex-direction: column; height: 918px; background: #ececec; }
    .title { display: grid; grid-template-columns: 1fr auto 1fr; align-items: center; height: 25px; box-sizing: border-box; background: linear-gradient(#e9e7ea, #d2d0d3); border-bottom: 1px solid #bab8ba; }
    .title b { font-weight: 400; font-size: 15px; color: #333; letter-spacing: -.03px; padding-left: 1px; }
    .lights { display: flex; gap: 9.4px; padding-left: 5px; }
    .lights i { width: 14px; height: 14px; border-radius: 50%; }
    .r { background: #ed6a5e; } .y { background: #f5bf4f; } .g { background: #5fc454; }
    .bar { display: flex; align-items: center; height: 44px; box-sizing: border-box; background: linear-gradient(#f6f6f6, #ebebeb); border-bottom: 1px solid #bcbcbc; }
    .bar.two { height: 45px; padding-top: 2px; } .bar.three { height: 45px; padding-top: 4px; }
    .cell { width: 38.36px; height: 37px; flex: none; display: flex; align-items: center; justify-content: center; box-sizing: border-box; border-radius: 3px; }
    .down { background: #d7d7d7; border: 1.5px solid #b1b1b1; }
    .ic { width: 28px; height: 28px; display: block; overflow: visible; }
    .ic .b, .ic .s { font-family: "Noto Sans", sans-serif; font-weight: 700; }
    .ic .s { font-family: "Liberation Serif", serif; font-weight: 400; }
    .ic .bi { font-weight: 700; font-style: italic; } .ic .bo { font-weight: 700; }
    .grip { flex: none; width: 19.2px; height: 20px; background: radial-gradient(circle, #c3c3c3 .8px, transparent 1.1px) 9px 0 / 3.6px 3.6px; background-clip: content-box; box-sizing: border-box; padding: 0 5px 0 9px; }
    .grip.first { width: 10.3px; padding: 0 3px 0 1px; }
    .drop { flex: none; width: 13.8px; height: 7px; background: #8d8d8d; clip-path: polygon(1px 0, 12px 0, 6.5px 6.5px); }
    .drop.on { background: #3b3b3b; }
    .three .cell { width: 36px; } .three .cell:nth-child(3) { margin-left: 3px; }
    .work { display: flex; flex: 1; min-height: 0; }
    .dock { width: 292px; display: flex; flex-direction: column; flex: none; }
    .dockhead { display: flex; align-items: center; height: 28px; padding-right: 3px; gap: 6px; }
    .dockhead .t { flex: 1; letter-spacing: -.05px; padding-top: 2px; }
    .dockhead svg { width: 16px; height: 16px; }
    .tools { display: flex; align-items: center; height: 35px; }
    .tools .cell { width: 29.2px; height: 28px; }
    .tools .drop { width: 12px; }
    .tree { flex: 1; box-sizing: border-box; background: #fff; border: solid #c6c6c6; border-width: 1px 1px 2px 0; }
    .row { display: flex; align-items: center; height: 21px; letter-spacing: -.05px; white-space: nowrap; }
    .child { padding-left: 47px; }
    .dim { color: #bdbdbd; font-weight: 600; letter-spacing: .22px; }
    .leg { padding-left: 46.7px; gap: 7px; letter-spacing: .16px; }
    .tri { width: 11px; height: 6px; margin: 0 10.7px 0 2px; background: #3c3c3c; clip-path: polygon(0 0, 100% 0, 50% 100%); flex: none; }
    .tri.none { background: none; } .tri.navy { background: #07224f; }
    .box { width: 16px; height: 16px; flex: none; border: 1.4px solid #bcbcbc; box-sizing: border-box; background: #fff; color: #8b8b8b; }
    .box.strong { color: #000; }
    .box svg { display: block; }
    .sym { width: 19px; height: 19px; flex: none; box-sizing: border-box; }
    .row > .box + .sym { margin: 0 7.3px 0 7px; }
    .row > .box + .ic { width: 24px; height: 24px; margin: 0 5px 0 4px; }
    .child > .box + .sym { margin: 0 7.4px 0 6.8px; }
    .well { display: flex; align-items: center; justify-content: center; }
    .well i { width: 4px; height: 4px; border-radius: 50%; background: #e98a90; border: 1.3px solid #6c3e43; }
    .county { border: 2px solid #1d1d1d; } .urban { background: #b3e4fc; } .census { border: 1.2px solid #9b9b9b; }
    .black { background: #000; } .white { background: #fff; }
    .sel { background: linear-gradient(#2f72db, #2a66d0); color: #fff; font-weight: 700; }
    .sel u { text-decoration-thickness: 1px; text-underline-offset: 3px; }
    .tabs { display: flex; height: 33px; align-items: flex-start; }
    .tab { box-sizing: border-box; display: flex; align-items: center; justify-content: center; padding-top: 2px; }
    .tab.a { width: 72px; height: 31px; padding-right: 5px; padding-top: 3px; background: linear-gradient(#ececec, #f6f6f6); border: solid #b6b6b6; border-width: 0 1px 2px 0; border-radius: 0 0 3px 0; }
    .tab.b { width: 86px; height: 29px; background: #dcdcdc; border: solid #b9b9b9; border-width: 0 1.5px 2px 0; border-radius: 0 0 3px 0; }
    .split { width: 7.5px; flex: none; display: flex; flex-direction: column; align-items: center; justify-content: center; gap: 1.6px; padding-top: 3px; }
    .split i { width: 2px; height: 2px; background: #c4c4c4; }
    .canvas { flex: 1; height: 755px; box-sizing: border-box; margin-top: 2px; background: #fff; border: solid #c8c8c8; border-width: 1px 0 1.5px 1px; overflow: hidden; }
    .map { display: block; width: 1272.5px; height: 753px; }
  `;
  render() {
    return html`<div class="window">
      <div class="title"><span class="lights"><i class="r"></i><i class="y"></i><i class="g"></i></span><b>*Spatial_Data - QGIS</b><span></span></div>
      ${bar(row1, "one")}${bar(row2, "two")}${bar(row3, "three")}
      <div class="work">
        <div class="dock">
          <div class="dockhead"><span class="t">Layers</span>
            <svg viewBox="0 0 16 16"><circle cx="8" cy="8" r="8" fill="#454545"/><path d="M6.5 6V4.3H12V9H10.5M4 6.5H10V11.5H4Z" fill="none" stroke="#eee" stroke-width="1.3"/></svg>
            <svg viewBox="0 0 16 16"><circle cx="8" cy="8" r="8" fill="#454545"/><path d="M4.8 4.8L11.2 11.2M11.2 4.8L4.8 11.2" stroke="#fff" stroke-width="2.4"/></svg></div>
          <div class="tools">${"brush groupAdd eye filter exprLayer v expand collapse remove".split(" ").map(cell)}</div>
          <div class="tree">
            <div class="row">${tri()}${check("off")}${icon("group")}Shapefiles</div>
            <div class="row child dim">${check("")}<span class="sym well"><i></i></span>Wells</div>
            <div class="row child dim">${check("")}<span class="sym county"></span>County Boundary</div>
            <div class="row child dim">${check("")}<svg class="sym" viewBox="0 0 19 19"><rect x="1" y="1" width="17" height="17" fill="#fff" stroke="#e0393e" stroke-width="1.6" stroke-dasharray="9 2.5 3 2.5"/></svg>PLSS_ Town_Range</div>
            <div class="row child dim">${check("")}<span class="sym urban"></span>Urban Areas</div>
            <div class="row child dim">${check("")}<span class="sym census"></span>Census Tracts</div>
            <div class="row dim">${tri("none")}${check("off")}${raster("#6f95cb", "#26344b", "#5f84b8")}Dborn_NW</div>
            <div class="row sel">${tri("navy")}${check("strong")}${raster("#7ba0dc", "#51668a", "#6a8fcd")}<u>dem</u></div>
            <div class="row leg"><span class="sym black"></span>634.005</div>
            <div class="row leg"><span class="sym white"></span>975.948</div>
          </div>
          <div class="tabs"><span class="tab a">Layers</span><span class="tab b">Browser</span></div>
        </div>
        <div class="split"><i></i><i></i><i></i><i></i><i></i><i></i></div>
        <div class="canvas">${terrain}</div>
      </div>
    </div>`;
  }
}
